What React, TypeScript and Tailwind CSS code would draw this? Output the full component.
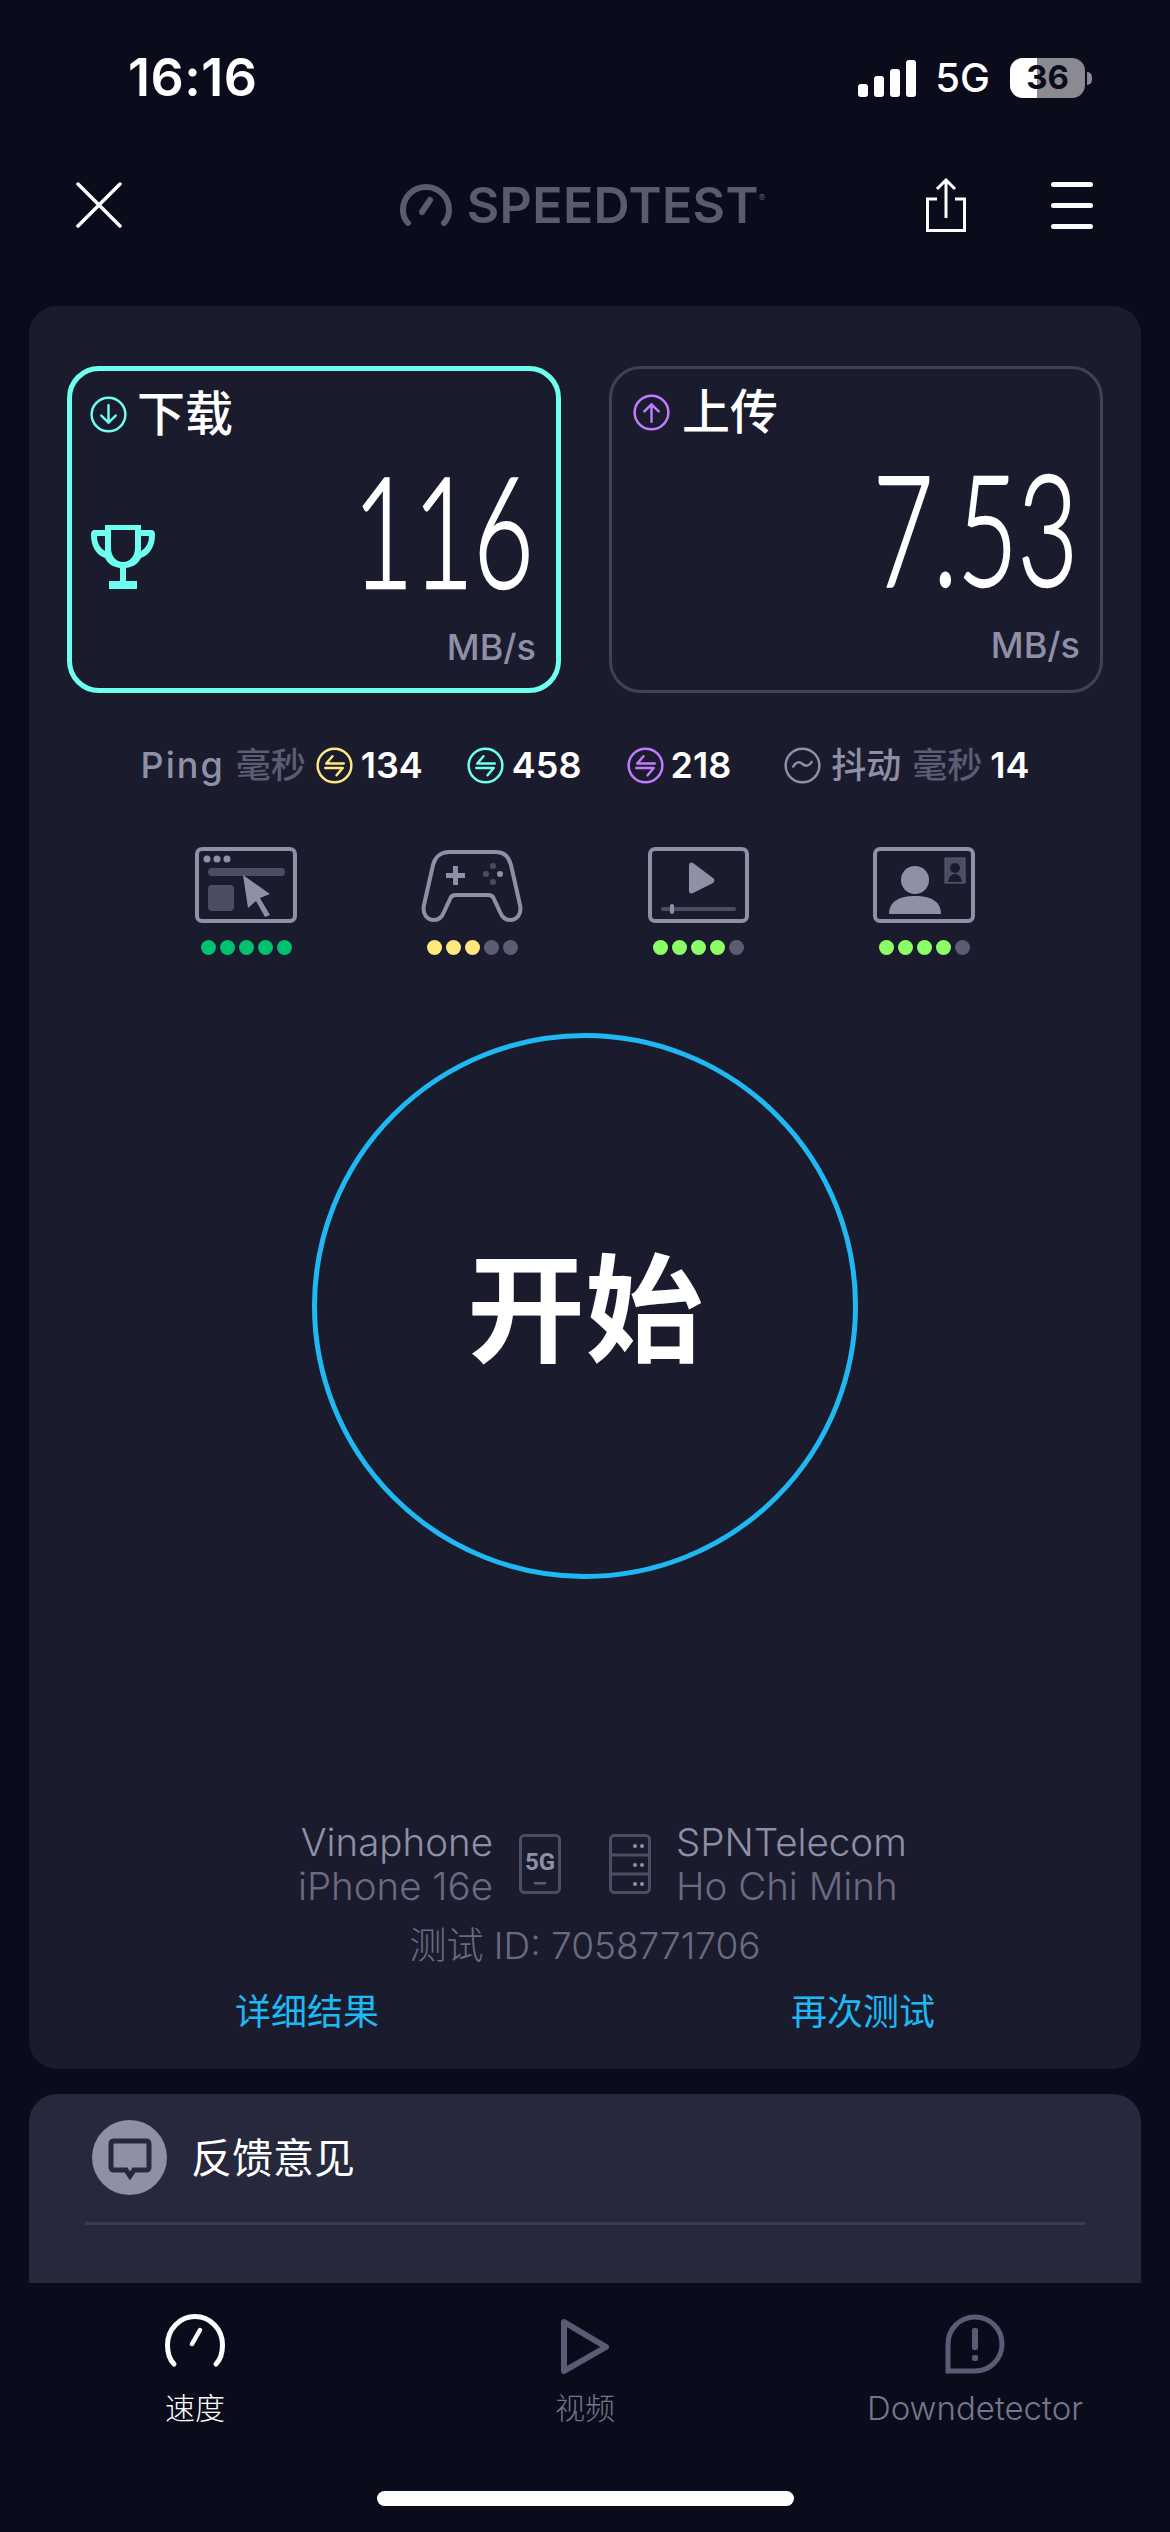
import React from 'react';

const CJK = "font-['Inter','Noto_Sans_CJK_SC',sans-serif]";

const RingIcon: React.FC<{ color: string; children: React.ReactNode }> = ({ color, children }) => (
  <svg width="37" height="37" viewBox="0 0 36 36" fill="none" stroke={color} strokeWidth="2.4" className="shrink-0">
    <circle cx="18" cy="18" r="16.4" />
    {children}
  </svg>
);

const PingGlyph = () => (
  <>
    <path d="M10 16h17M10 16l6-7" strokeLinecap="round" />
    <path d="M26 20.500H9M26 20.500l-6 7" strokeLinecap="round" />
  </>
);

const Dots: React.FC<{ colors: string[] }> = ({ colors }) => (
  <div className="flex justify-center gap-1 mt-[17px]">
    {colors.map((c, i) => (
      <span key={i} className="w-[15px] h-[15px] rounded-full" style={{ backgroundColor: c }} />
    ))}
  </div>
);

const frame = '#8f90a6';
const dim = '#4c4d63';

const services = [
  {
    dots: ['#00c26e', '#00c26e', '#00c26e', '#00c26e', '#00c26e'],
    icon: (
      <svg width="102" height="76" viewBox="0 0 102 76" fill="none">
        <rect x="2" y="2" width="98" height="72" rx="5" stroke={frame} strokeWidth="4" />
        <circle cx="12" cy="12" r="3.5" fill={frame} />
        <circle cx="22" cy="12" r="3.5" fill={frame} />
        <circle cx="32" cy="12" r="3.5" fill={frame} />
        <rect x="13" y="21" width="77" height="8" rx="4" fill={dim} />
        <rect x="13" y="38" width="26" height="26" rx="4" fill={dim} />
        <path d="M48 28l27 19-10 4 10 17-5 2-9-16-8 7z" fill={frame} />
      </svg>
    ),
  },
  {
    dots: ['#ffe97f', '#ffe97f', '#ffe97f', '#5c5d72', '#5c5d72'],
    icon: (
      <svg width="103" height="76" viewBox="0 0 103 76" fill="none">
        <path
          d="M28 5h47c8 0 13 5 15 13l9 40c2 9-3 15-10 15-5 0-8-3-10-8l-6-13c-1-3-3-4-6-4H35c-3 0-5 1-6 4l-6 13c-2 5-5 8-10 8-7 0-12-6-10-15l9-40C14 10 20 5 28 5z"
          stroke={frame}
          strokeWidth="4"
        />
        <path d="M32 19h5v7h7v5h-7v7h-5v-7h-7v-5h7z" fill={frame} />
        <circle cx="72" cy="19" r="3" fill={dim} />
        <circle cx="72" cy="35" r="3" fill={dim} />
        <circle cx="65" cy="27" r="3" fill={dim} />
        <circle cx="79" cy="27" r="3" fill={frame} />
      </svg>
    ),
  },
  {
    dots: ['#8cff66', '#8cff66', '#8cff66', '#8cff66', '#5c5d72'],
    icon: (
      <svg width="101" height="76" viewBox="0 0 101 76" fill="none">
        <rect x="2" y="2" width="97" height="72" rx="5" stroke={frame} strokeWidth="4" />
        <path d="M41 18c0-2 2-3 4-2l20 15c2 1 2 3 0 5L45 46c-2 1-4 0-4-2z" fill={frame} />
        <rect x="13" y="60" width="75" height="4" rx="2" fill={dim} />
        <rect x="22" y="57" width="4" height="10" rx="2" fill={frame} />
      </svg>
    ),
  },
  {
    dots: ['#8cff66', '#8cff66', '#8cff66', '#8cff66', '#5c5d72'],
    icon: (
      <svg width="102" height="76" viewBox="0 0 102 76" fill="none">
        <rect x="2" y="2" width="98" height="72" rx="5" stroke={frame} strokeWidth="4" />
        <ellipse cx="42" cy="33" rx="14" ry="14" fill={frame} />
        <path d="M16 67c0-13 11-18 26-18s26 5 26 18z" fill={frame} />
        <rect x="72" y="11" width="20" height="25" fill={dim} stroke="#5c5d72" />
        <circle cx="82" cy="21" r="5" fill="#1a1c2e" />
        <path d="M75 35c1-6 4-8 7-8s6 2 7 8z" fill="#1a1c2e" />
      </svg>
    ),
  },
];

const ResultCard: React.FC<{
  active?: boolean;
  label: string;
  value: string;
  icon: React.ReactNode;
  trophy?: boolean;
}> = ({ active, label, value, icon, trophy }) => (
  <div
    className={`relative h-[327px] rounded-[32px] ${
      active ? 'border-[5px] border-[#6ffff0]' : 'border-[3px] border-[#3f4156]'
    }`}
  >
    <div
      className={`absolute top-[18px] flex items-center ${
        active ? 'left-[18px] gap-[10px]' : 'left-[21px] gap-[12px]'
      }`}
    >
      {icon}
      <span className={`${CJK} text-[48px] leading-[50px] font-medium text-white`}>{label}</span>
    </div>
    {trophy && (
      <svg width="64" height="64" viewBox="0 0 64 64" fill="#6ffff0" className="absolute left-[19px] top-[154px]">
        <path d="M14 0h36v5h10c3 0 4 2 4 5 0 11-5 20-14 23-3 6-8 9-15 10v13h11v8H18v-8h11V43c-7-1-12-4-15-10C5 30 0 21 0 10c0-3 1-5 4-5h10zm6 5v18c0 8 5 14 12 14s12-6 12-14V5zM14 11H6c0 7 3 12 8 15zm36 0v15c5-3 8-8 8-15z" />
      </svg>
    )}
    <div className="absolute right-[22px] top-[79px] font-['Lato',sans-serif] font-light text-[155px] leading-[157px] text-white origin-right scale-x-[0.67] whitespace-nowrap [-webkit-text-stroke:2.5px_white]">
      {value}
    </div>
    <div className="absolute right-[20px] top-[256px] font-['Inter',sans-serif] font-medium text-[36px] leading-[40px] text-[#8f90a6]">
      MB/s
    </div>
  </div>
);

const App: React.FC = () => (
  <div className={`${CJK} w-[1170px] h-[2532px] bg-[#0a0c1b] flex flex-col overflow-hidden`}>
    {/* status bar */}
    <div className="h-[156px] flex items-center justify-between pl-[128px] pr-[78px]">
      <span className="font-['Inter',sans-serif] font-semibold text-[52px] leading-none text-white tracking-[0.5px]">
        16:16
      </span>
      <div className="flex items-center">
        <div className="flex items-end gap-[6px] h-[37px]">
          {[13, 21, 28, 37].map((h) => (
            <span key={h} className="w-[10px] rounded-[3px] bg-white" style={{ height: h }} />
          ))}
        </div>
        <span className="ml-[19px] font-['Inter',sans-serif] font-medium text-[40px] leading-none text-white">5G</span>
        <div className="relative ml-[20px] w-[75px] h-[40px] rounded-[13px] overflow-hidden bg-[#8a8a90]">
          <div className="absolute inset-y-0 left-0 w-[27px] bg-white" />
          <span className="absolute inset-0 flex items-center justify-center font-['Inter',sans-serif] font-bold text-[33px] text-[#0a0c1b]">
            36
          </span>
        </div>
        <span className="ml-[2px] w-[5px] h-[13px] rounded-r-full bg-[#8a8a90]" />
      </div>
    </div>

    {/* header */}
    <div className="h-[98px] grid grid-cols-[1fr_auto_1fr] items-center pl-[76px] pr-[77px]">
      <svg width="46" height="46" viewBox="0 0 46 46" stroke="#fff" strokeWidth="3.500" strokeLinecap="round">
        <path d="M2 2l42 42M44 2L2 44" />
      </svg>
      <div className="flex items-center gap-[15px] -ml-[4px]">
        <svg width="52" height="42" viewBox="0 0 52 42" fill="none" stroke="#5a5b6e" strokeWidth="6" strokeLinecap="round">
          <path d="M8 39C4 35 3 30 3 26 3 13 13 3 26 3s23 10 23 23c0 4-1 9-5 13" />
          <path d="M22 28l8-12" />
        </svg>
        <span className="font-['Inter',sans-serif] font-semibold text-[50px] leading-none text-[#5a5b6e] tracking-[0.4px]">
          SPEEDTEST
          <sup className="text-[9px] align-super">®</sup>
        </span>
      </div>
      <div className="flex items-center justify-end gap-[85px]">
        <svg width="40" height="54" viewBox="0 0 40 54" fill="none" stroke="#fff" strokeWidth="3">
          <path d="M20 2v38M11 11l9-9 9 9" />
          <path d="M11 21H1.500v31.500h37V21H29" />
        </svg>
        <div className="flex flex-col gap-[16px] w-[42px]">
          <span className="h-[5px] rounded-full bg-white" />
          <span className="h-[5px] rounded-full bg-white" />
          <span className="h-[5px] rounded-full bg-white" />
        </div>
      </div>
    </div>

    {/* main panel */}
    <div className="mt-[52px] mx-[29px] h-[1763px] shrink-0 rounded-[28px] bg-[#1a1c2e] px-[38px] pt-[60px]">
      <div className="grid grid-cols-2 gap-[48px]">
        <ResultCard
          active
          label="下载"
          value="116"
          trophy
          icon={
            <RingIcon color="#6ffff0">
              <path d="M18 9v17M11 19l7 7 7-7" strokeLinecap="round" strokeLinejoin="round" />
            </RingIcon>
          }
        />
        <ResultCard
          label="上传"
          value="7.53"
          icon={
            <RingIcon color="#c27bff">
              <path d="M18 27V10M11 17l7-7 7 7" strokeLinecap="round" strokeLinejoin="round" />
            </RingIcon>
          }
        />
      </div>

      {/* ping row */}
      <div className="mt-[50px] h-[44px] flex items-center justify-center text-[36px] leading-[44px]">
        <span className="text-[#8f90a6] font-medium tracking-[2px]">Ping</span>
        <span className="ml-[11px] text-[35px] text-[#5c5d72] font-medium">毫秒</span>
        <span className="ml-[10px]">
          <RingIcon color="#ffe97f"><PingGlyph /></RingIcon>
        </span>
        <span className="ml-[8px] text-white font-semibold">134</span>
        <span className="ml-[44px]">
          <RingIcon color="#6ffff0"><PingGlyph /></RingIcon>
        </span>
        <span className="ml-[8px] text-white font-semibold">458</span>
        <span className="ml-[45px]">
          <RingIcon color="#c27bff"><PingGlyph /></RingIcon>
        </span>
        <span className="ml-[7px] text-white font-semibold">218</span>
        <span className="ml-[53px]">
          <RingIcon color="#8f90a6">
            <path d="M9 19c3-5 6-5 9-2.500s6 2.500 9-2" strokeLinecap="round" />
          </RingIcon>
        </span>
        <span className="ml-[10px] text-[35px] text-[#8f90a6] font-medium">抖动</span>
        <span className="ml-[11px] text-[35px] text-[#5c5d72] font-medium">毫秒</span>
        <span className="ml-[8px] text-white font-semibold">14</span>
      </div>

      {/* service ratings */}
      <div className="mt-[60px] grid grid-cols-[repeat(4,226px)] justify-center">
        {services.map((s, i) => (
          <div key={i} className="flex flex-col items-center">
            {s.icon}
            <Dots colors={s.dots} />
          </div>
        ))}
      </div>

      {/* start button */}
      <div className="mt-[78px] mx-auto w-[546px] h-[546px] rounded-full border-[5px] border-[#1fb8f2] flex items-center justify-center">
        <span className="font-['Noto_Sans_CJK_SC',sans-serif] font-bold text-[118px] leading-none text-white -mt-[8px]">开始</span>
      </div>

      {/* carrier and server */}
      <div className="mt-[241px] pl-[29px] flex justify-center text-[38.5px] leading-[44px] font-light">
        <div className="w-[196px] text-right whitespace-nowrap flex flex-col items-end">
          <span className="text-[#8f90a6]">Vinaphone</span>
          <span className="text-[#6a6b80]">iPhone 16e</span>
        </div>
        <svg width="42" height="60" viewBox="0 0 42 60" fill="none" className="ml-[26px] mt-[14px]">
          <rect x="1.500" y="1.500" width="39" height="57" rx="4" stroke="#4c4d63" strokeWidth="3" />
          <text x="21" y="36" textAnchor="middle" fontFamily="Roboto, sans-serif" fontWeight="700" fontSize="24" fill="#8f90a6">
            5G
          </text>
          <rect x="15" y="48" width="12" height="2.500" fill="#5c5d72" />
        </svg>
        <svg width="42" height="60" viewBox="0 0 42 60" fill="none" className="ml-[48px] mt-[14px]">
          <rect x="1.500" y="1.500" width="39" height="57" rx="4" stroke="#4c4d63" strokeWidth="3" />
          <path d="M2 21h38M2 40h38" stroke="#4c4d63" strokeWidth="3" />
          {[12, 31, 50].map((y) => (
            <g key={y} fill="#8f90a6">
              <circle cx="26" cy={y} r="2" />
              <circle cx="33" cy={y} r="2" />
            </g>
          ))}
        </svg>
        <div className="ml-[25px] w-[226px] whitespace-nowrap flex flex-col">
          <span className="text-[#8f90a6]">SPNTelecom</span>
          <span className="text-[#6a6b80]">Ho Chi Minh</span>
        </div>
      </div>
      <div className="mt-[16px] text-center text-[37px] leading-[44px] font-light text-[#6a6b80]">测试 ID: 7058771706</div>
      <div className="mt-[22px] -mx-[38px] grid grid-cols-2 text-center text-[36px] leading-[44px] text-[#1db9f5]">
        <span>详细结果</span>
        <span>再次测试</span>
      </div>
    </div>

    {/* feedback */}
    <div className="mt-[25px] mx-[29px] h-[189px] shrink-0 rounded-t-[28px] bg-[#26283b] px-[56px]">
      <div className="pt-[26px] flex items-center ml-[7px]">
        <div className="w-[75px] h-[75px] rounded-full bg-[#8f90a6] flex items-center justify-center">
          <svg width="44" height="44" viewBox="0 0 44 44" fill="#8f90a6" stroke="#26283b" strokeWidth="5">
            <path d="M6 5h32c2 0 3 1 3 3v23c0 2-1 3-3 3H26l-4 6-4-6H6c-2 0-3-1-3-3V8c0-2 1-3 3-3z" />
          </svg>
        </div>
        <span className="ml-[24px] text-[41px] leading-[50px] text-white">反馈意见</span>
      </div>
      <div className="mt-[27px] h-[3px] bg-[#393b50]" />
    </div>

    {/* tab bar */}
    <div className="grid grid-cols-3 pt-[31px]">
      <div className="flex flex-col items-center">
        <svg width="60" height="60" viewBox="0 0 60 60" fill="none" stroke="#fff" strokeLinecap="round">
          <path d="M9 50C4 45 2.500 38 2.500 31 2.500 15 15 2.500 30 2.500S57.500 15 57.500 31c0 7-1.500 14-6.500 19" strokeWidth="5" />
          <path d="M27 30l8-14" strokeWidth="4.500" />
        </svg>
        <span className="mt-[14px] text-[30px] leading-[40px] font-light text-white">速度</span>
      </div>
      <div className="flex flex-col items-center">
        <svg width="60" height="60" viewBox="0 0 60 60" fill="none" stroke="#5a5b75" strokeWidth="6" strokeLinejoin="round">
          <path d="M9 8l42 25-42 24z" />
        </svg>
        <span className="mt-[14px] text-[30px] leading-[40px] font-light text-[#75768c]">视频</span>
      </div>
      <div className="flex flex-col items-center">
        <svg width="60" height="60" viewBox="0 0 60 60" fill="none">
          <path d="M3 57V30C3 15 15 3 30 3s27 12 27 27-12 27-27 27z" stroke="#5a5b75" strokeWidth="5" />
          <rect x="27" y="14" width="6" height="22" rx="2" fill="#5a5b75" />
          <rect x="27" y="41" width="6" height="6" rx="2" fill="#5a5b75" />
        </svg>
        <span className="mt-[14px] text-[33px] leading-[40px] font-light text-[#75768c]">Downdetector</span>
      </div>
    </div>

    {/* home indicator */}
    <div className="mt-[63px] mx-auto w-[417px] h-[15px] rounded-full bg-white" />
  </div>
);

export default App;
